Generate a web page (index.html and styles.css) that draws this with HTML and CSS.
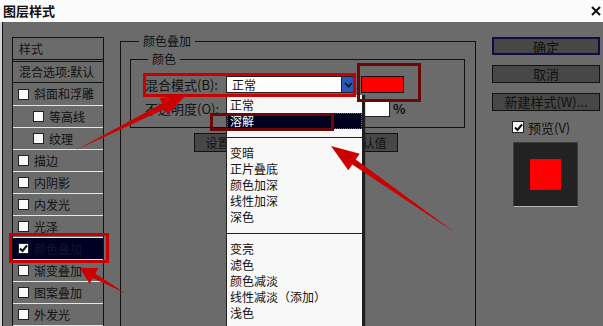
FILE: index.html
```html
<!DOCTYPE html>
<html lang="zh-CN">

<head>
    <meta charset="UTF-8" />
    <title>图层样式</title>
    <link rel="stylesheet" href="styles.css">
</head>

<body>
    <div class="window">

        <!-- title bar -->
        <div class="titlebar">
            <span class="title">图层样式</span>
            <svg class="close" width="10" height="10" viewBox="0 0 10 10">
                <path d="M1 1L9 9M9 1L1 9" stroke="#111" stroke-width="2" />
            </svg>
        </div>

        <div class="dialog">
            <!-- styles list -->
            <ul class="style-list">
                <li class="head">样式</li>
                <li class="head blend">混合选项:默认</li>
                <li class="first"><span class="check"></span>斜面和浮雕</li>
                <li class="sub"><span class="check"></span>等高线</li>
                <li class="sub"><span class="check"></span>纹理</li>
                <li><span class="check"></span>描边</li>
                <li><span class="check"></span>内阴影</li>
                <li><span class="check"></span>内发光</li>
                <li><span class="check"></span>光泽</li>
                <li class="active">
                    <span class="check">
                        <svg width="9" height="9" viewBox="0 0 9 9"><path d="M1 4.5L3.5 7L8 1.5" fill="none" stroke="#111" stroke-width="2" /></svg>
                    </span>颜色叠加
                </li>
                <li><span class="check"></span>渐变叠加</li>
                <li><span class="check"></span>图案叠加</li>
                <li><span class="check"></span>外发光</li>
            </ul>

            <!-- colour overlay settings -->
            <fieldset class="group overlay-group">
                <legend>颜色叠加</legend>
                <fieldset class="group color-group">
                    <legend>颜色</legend>
                    <div class="fields">
                        <div class="field">
                            <span class="label">混合模式(B):</span>
                            <div class="select">
                                <span class="select-value">正常</span>
                                <span class="select-arrow">
                                    <svg width="9" height="6" viewBox="0 0 9 6"><path d="M1 1L4.5 4.5L8 1" fill="none" stroke="#111" stroke-width="1.6" /></svg>
                                </span>
                            </div>
                            <span class="swatch"></span>
                        </div>
                        <div class="field">
                            <span class="label">不透明度(O):</span>
                            <span class="slider"></span>
                            <span class="num-input"></span>
                            <span class="percent">%</span>
                        </div>
                    </div>
                </fieldset>
                <div class="reset-row">
                    <button class="btn">设置为默认值</button>
                    <button class="btn">复位为默认值</button>
                </div>
            </fieldset>

            <!-- right column -->
            <div class="side">
                <button class="btn default">确定</button>
                <button class="btn">取消</button>
                <button class="btn">新建样式(W)...</button>
                <div class="preview-check">
                    <span class="check">
                        <svg width="9" height="9" viewBox="0 0 9 9"><path d="M1 4.5L3.5 7L8 1.5" fill="none" stroke="#111" stroke-width="2" /></svg>
                    </span>预览(V)
                </div>
                <div class="preview">
                    <span class="preview-swatch"></span>
                </div>
            </div>
        </div>

        <!-- open blend mode menu -->
        <ul class="menu">
            <li>正常</li>
            <li class="selected">溶解</li>
            <li class="sep"></li>
            <li>变暗</li>
            <li>正片叠底</li>
            <li>颜色加深</li>
            <li>线性加深</li>
            <li>深色</li>
            <li class="sep"></li>
            <li>变亮</li>
            <li>滤色</li>
            <li>颜色减淡</li>
            <li>线性减淡（添加）</li>
            <li>浅色</li>
        </ul>

        <!-- annotations -->
        <div class="mark mark-blend"></div>
        <div class="mark dark mark-swatch"></div>
        <div class="mark dark mark-dissolve"></div>
        <div class="mark mark-layer"></div>
        <svg class="arrows" width="603" height="326" viewBox="0 0 603 326">
            <polygon points="76,150 162.3,103.5 159.6,98.2 186,95 167.6,114.2 164.9,108.9" />
            <polygon points="457,234 355.7,159.5 359.7,153.8 331,146 348.3,170.2 352.3,164.5" />
            <polygon points="125,293 95.2,273.6 98.4,267.9 80,268 89.6,283.7 92.8,278" />
        </svg>
    </div>
</body>

</html>
```

FILE: styles.css
```css
* {
    box-sizing: border-box;
}

body {
    margin: 0;
    width: 603px;
    height: 326px;
    overflow: hidden;
    background: #6b6b6b;
    font-family: "Noto Sans CJK SC", "Noto Sans", sans-serif;
    font-size: 12px;
    color: #111;
}

.window {
    position: relative;
    height: 326px;
}

/* --- TITLE BAR --- */
.titlebar {
    height: 22px;
    background: #fbfbfb;
    display: flex;
    justify-content: space-between;
    align-items: center;
    padding: 0 2px 0 3px;
}

.title {
    font-size: 13px;
    font-weight: bold;
    line-height: 14px;
}

.dialog {
    display: flex;
    height: 304px;
    border-left: 2px solid #d2d2d2;
    box-shadow: inset 1px 0 0 #111;
}

/* --- STYLE LIST --- */
.style-list {
    list-style: none;
    margin: 15px 0 0 10px;
    padding: 0;
    width: 92px;
    flex: none;
    border: 1px solid #111;
    border-bottom: none;
}

.style-list li {
    height: 22px;
    display: flex;
    align-items: center;
    padding-left: 5px;
    line-height: 14px;
    border-bottom: 1px solid #e6e6e6;
    white-space: nowrap;
}

.style-list .head {
    height: 24px;
    padding-left: 6px;
    border-bottom: 3px double #111;
}

.style-list .blend {
    height: 21px;
    border-bottom: 1px solid #111;
}

.style-list .first {
    height: 23px;
}

.style-list .sub {
    padding-left: 20px;
}

.style-list .active {
    background: #000024;
    color: #15152e;
}

.check {
    width: 11px;
    height: 11px;
    flex: none;
    margin-right: 5px;
    background: #fafafa;
    border: 1px solid #222;
    display: flex;
    align-items: center;
    justify-content: center;
}

/* --- GROUP BOXES --- */
.group {
    margin: 0;
    padding: 0;
    min-width: 0;
    border: 1px solid #111;
}

.group legend {
    padding: 0 4px;
    font-size: 12px;
    line-height: 14px;
}

.overlay-group {
    flex: none;
    margin: 12px 0 0 16px;
    width: 356px;
    height: 330px;
}

.overlay-group > legend {
    margin-left: 18px;
}

.color-group {
    margin: 4px 0 0 9px;
    width: 335px;
}

.color-group > legend {
    margin-left: 17px;
}

.fields {
    padding: 10px 0 10px 14px;
}

.field {
    display: flex;
    align-items: center;
    height: 17px;
}

.field + .field {
    margin-top: 7px;
}

.label {
    width: 81px;
    font-size: 13px;
    line-height: 15px;
    white-space: nowrap;
}

.select {
    display: flex;
    width: 129px;
    height: 17px;
    background: #fff;
    border: 1px solid #222;
}

.select-value {
    flex: 1;
    padding-left: 5px;
    line-height: 15px;
}

.select-arrow {
    width: 13px;
    background: #2a58b6;
    border-left: 1px solid #222;
    display: flex;
    align-items: center;
    justify-content: center;
}

.swatch {
    width: 43px;
    height: 17px;
    margin-left: 6px;
    background: #ff0000;
    border: 1px solid #111;
}

.slider {
    width: 137px;
}

.num-input {
    width: 27px;
    height: 17px;
    background: #fff;
    border: 1px solid #222;
}

.percent {
    margin-left: 3px;
    font-size: 13px;
    font-weight: bold;
}

.reset-row {
    display: flex;
    gap: 14px;
    margin-top: 5px;
    padding-left: 73px;
}

/* --- BUTTONS --- */
.btn {
    height: 19px;
    width: 95px;
    padding: 0;
    background: #474747;
    border: 1px solid #111;
    font-family: inherit;
    font-size: 12px;
    line-height: 16px;
    color: #111;
}

.side {
    flex: none;
    width: 108px;
    margin: 15px 0 0 16px;
    display: flex;
    flex-direction: column;
}

.side .btn {
    width: 108px;
    height: 18px;
    font-size: 13px;
}

.side .btn + .btn {
    margin-top: 10px;
}

.side .default {
    border: 2px solid #0e0e44;
}

.preview-check {
    display: flex;
    align-items: center;
    margin: 10px 0 0 20px;
    height: 12px;
    font-size: 13px;
    white-space: nowrap;
}

.preview-check .check {
    width: 12px;
    height: 12px;
    margin-right: 4px;
}

.preview {
    width: 65px;
    height: 65px;
    margin: 9px 0 0 21px;
    background: #222;
    border: 1px solid #3c3c3c;
    border-bottom: 1px solid #b4b4b4;
    display: flex;
    align-items: center;
    justify-content: center;
}

.preview-swatch {
    width: 31px;
    height: 31px;
    background: #ff0000;
}

/* --- OPEN MENU --- */
.menu {
    position: absolute;
    left: 226px;
    top: 95px;
    width: 136px;
    height: 240px;
    margin: 0;
    padding: 2px 0 0;
    list-style: none;
    background: #f8f8f8;
    border-left: 1px solid #222;
    box-shadow: 3px 0 1px #1e1e1e;
}

.menu li {
    height: 16px;
    line-height: 16px;
    padding-left: 3px;
    white-space: nowrap;
}

.menu .sep {
    background: linear-gradient(#222, #222) 0 8px / 100% 1px no-repeat;
}

.menu .selected {
    background: #00001f;
    color: #fff;
    outline: 1px dotted #ff2a2a;
    outline-offset: -1px;
}

/* --- ANNOTATIONS --- */
.mark {
    position: absolute;
    border: 3px solid #c80000;
}

.mark.dark {
    border-color: #6a0808;
}

.mark-blend {
    left: 143px;
    top: 73px;
    width: 213px;
    height: 24px;
}

.mark-swatch {
    left: 357px;
    top: 63px;
    width: 64px;
    height: 39px;
}

.mark-dissolve {
    left: 210px;
    top: 113px;
    width: 124px;
    height: 18px;
}

.mark-layer {
    left: 9px;
    top: 233px;
    width: 100px;
    height: 30px;
}

.arrows {
    position: absolute;
    left: 0;
    top: 0;
    pointer-events: none;
}

.arrows polygon {
    fill: #cc0000;
}
```
